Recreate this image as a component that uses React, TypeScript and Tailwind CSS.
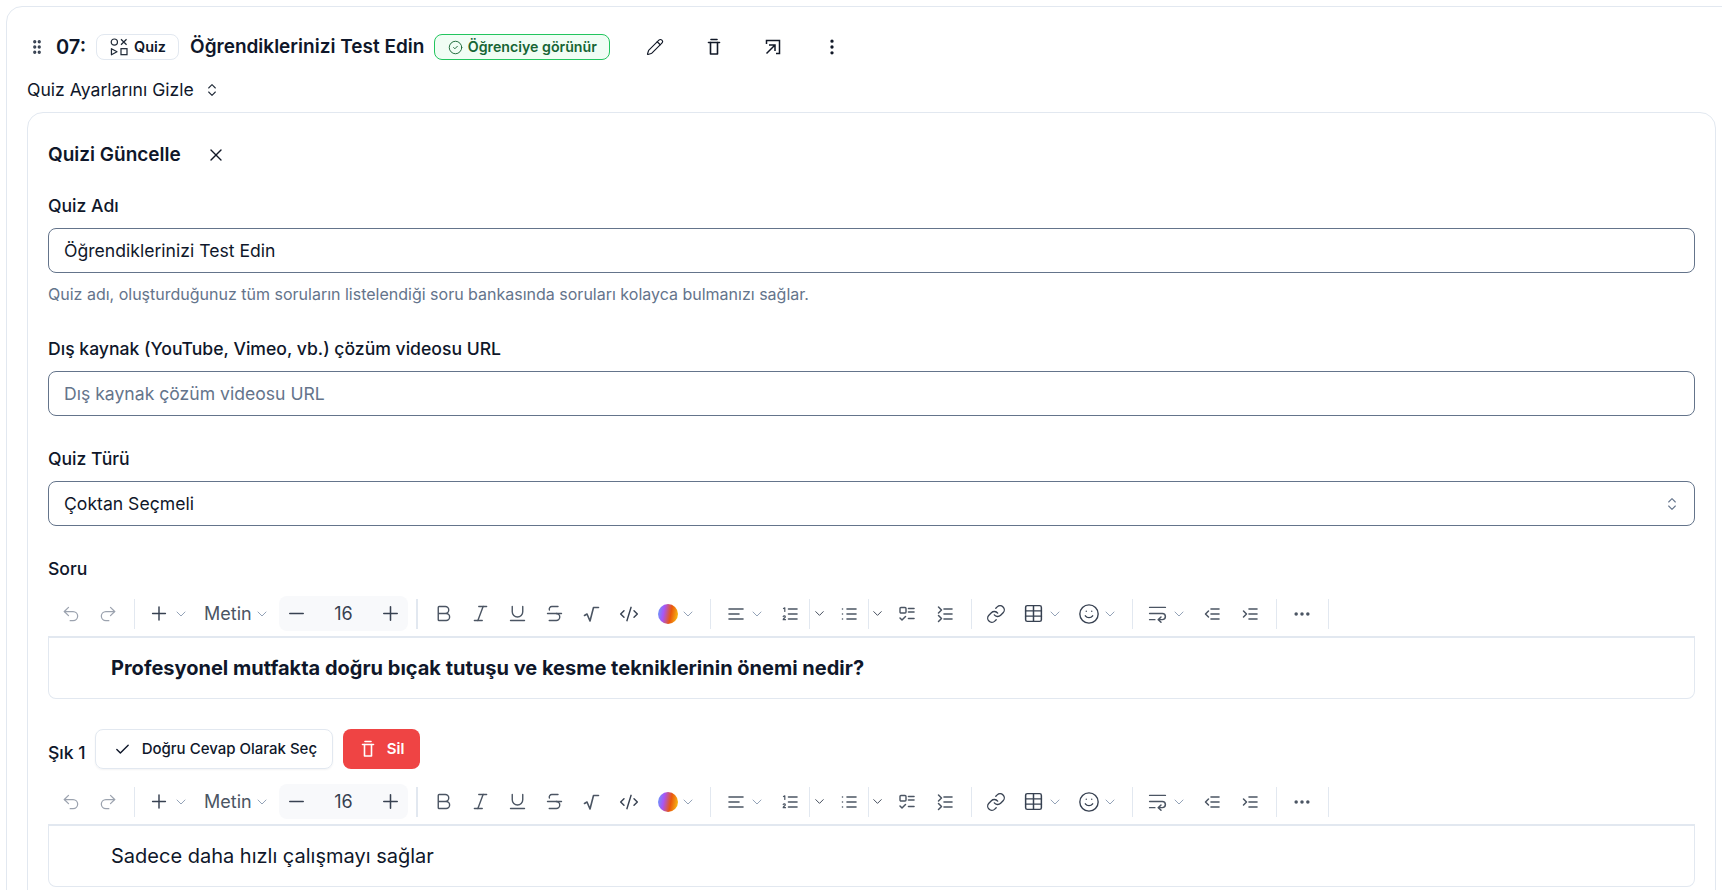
import React from 'react';
import {
  GripVertical, Pencil, X, Check, ChevronsUpDown, EllipsisVertical, Ellipsis, CircleCheck, Undo2, Redo2, Plus, Minus,
  ChevronDown, Bold, Italic, Underline, Strikethrough, CodeXml, Link, Table, Smile, WrapText,
} from 'lucide-react';

const INK = '#4b5563';

// thin trash used in the header and on the delete button
function TrashIcon({ className }: { className?: string }) {
  return (
    <svg viewBox="0 0 20 20" fill="none" stroke="currentColor" strokeWidth="1.6" strokeLinecap="round" strokeLinejoin="round" className={className}>
      <path d="M7 2.5h6" />
      <path d="M4.5 5.5h11" />
      <path d="M6.5 5.5v11.5h7V5.5" />
    </svg>
  );
}

function Lines({ children }: { children: React.ReactNode }) {
  return (
    <svg viewBox="0 0 20 20" fill="none" stroke={INK} strokeWidth="1.6" strokeLinecap="round" strokeLinejoin="round" className="w-5 h-5">
      {children}
    </svg>
  );
}

function Chev({ className, dark }: { className: string; dark?: boolean }) {
  return (
    <div className={`w-3 flex justify-center shrink-0 ${className}`}>
      <ChevronDown className={dark ? 'w-[15px] h-[15px] text-[#374151] shrink-0' : 'w-4 h-4 text-[#94a3b8] shrink-0'} strokeWidth={1.5} />
    </div>
  );
}

function Sep({ className }: { className: string }) {
  return <div className={`w-px h-[30px] bg-[#e2e8f0] shrink-0 ${className}`} />;
}

function Tool({ className, children }: { className: string; children: React.ReactNode }) {
  return <div className={`w-[22px] flex items-center justify-center shrink-0 ${className}`}>{children}</div>;
}

function Toolbar() {
  return (
    <div className="flex items-center h-[35px] text-[#374151]">
      <Tool className="ml-[12px]"><Undo2 className="w-5 h-5 text-[#9ca3af]" strokeWidth={1.5} /></Tool>
      <Tool className="ml-[15px]"><Redo2 className="w-5 h-5 text-[#9ca3af]" strokeWidth={1.5} /></Tool>
      <Sep className="ml-[15px]" />
      <Tool className="ml-[13px]"><Plus className="w-[23px] h-[23px] text-[#374151]" strokeWidth={1.6} /></Tool>
      <Chev className="ml-[5px]" />
      <span className="ml-[17px] w-[48px] text-[18px] text-[#4b5563] whitespace-nowrap">Metin</span>
      <Chev className="ml-[4px]" />
      <div className="ml-[11px] w-[129px] h-[35px] rounded-lg bg-[#f8f9fb] flex items-center justify-between px-[6px] shrink-0">
        <Minus className="w-[23px] h-[23px] text-[#374151]" strokeWidth={1.6} />
        <span className="text-[18px] text-[#374151]">16</span>
        <Plus className="w-[23px] h-[23px] text-[#374151]" strokeWidth={1.6} />
      </div>
      <div className="ml-[8px] w-[2px] h-[30px] bg-[#e2e8f0] shrink-0" />
      <Tool className="ml-[14px]"><Bold className="w-[21px] h-[21px] text-[#4b5563]" strokeWidth={1.6} /></Tool>
      <Tool className="ml-[15px]"><Italic className="w-[21px] h-[21px] text-[#4b5563]" strokeWidth={1.6} /></Tool>
      <Tool className="ml-[15px]"><Underline className="w-[21px] h-[21px] text-[#4b5563]" strokeWidth={1.6} /></Tool>
      <Tool className="ml-[15px]"><Strikethrough className="w-[21px] h-[21px] text-[#4b5563]" strokeWidth={1.6} /></Tool>
      <Tool className="ml-[16px]">
        <Lines><path d="M2.5 11.5 5 10l3 7 3.5-13.5h5" /></Lines>
      </Tool>
      <Tool className="ml-[15px]"><CodeXml className="w-5 h-5 text-[#374151]" strokeWidth={1.7} /></Tool>
      <Tool className="ml-[17px]">
        <div className="w-5 h-5 rounded-full bg-[linear-gradient(100deg,#60a5fa_0%,#a855f7_30%,#ea580c_62%,#facc15_100%)]" />
      </Tool>
      <Chev className="ml-[3px]" />
      <Sep className="ml-[16px]" />
      <Tool className="ml-[14px]">
        <Lines><path d="M3 5h14M3 10h10M3 15h14" /></Lines>
      </Tool>
      <Chev className="ml-[4px]" />
      <Tool className="ml-[16px]">
        <Lines>
          <path d="M8.5 5H17M8.5 10H17M8.5 15H17" />
          <path d="M3.5 4.5 4.8 3.8V7.5" strokeWidth="1.2" />
          <path d="M3.2 12.5c.5-.9 2.3-.7 2.1.5-.1.8-2.1 1.5-2.1 2.7h2.3" strokeWidth="1.2" />
        </Lines>
      </Tool>
      <Sep className="ml-[8px]" />
      <Chev dark className="ml-[3px]" />
      <Tool className="ml-[13px]">
        <Lines><path d="M8 5h9M8 10h9M8 15h9M3.5 5h.01M3.5 10h.01M3.5 15h.01" /></Lines>
      </Tool>
      <Sep className="ml-[8px]" />
      <Chev dark className="ml-[2px]" />
      <Tool className="ml-[13px]">
        <Lines>
          <rect x="3" y="3.5" width="6" height="5.5" rx="1" strokeWidth="1.4" />
          <path d="M11.5 4.5H17M11.5 8H17M11.5 14.5H17" />
          <path d="m3 14 2 2 3.5-3.5" strokeWidth="1.5" />
        </Lines>
      </Tool>
      <Tool className="ml-[16px]">
        <Lines>
          <path d="M9 5h8M9 10h8M9 15h8" />
          <path d="m3.5 3 3 3-3 3M3.5 11.5l3 3-3 3" strokeWidth="1.5" />
        </Lines>
      </Tool>
      <Sep className="ml-[15px]" />
      <Tool className="ml-[13px]"><Link className="w-5 h-5 text-[#374151]" strokeWidth={1.6} /></Tool>
      <Tool className="ml-[15px]"><Table className="w-[21px] h-[21px] text-[#374151]" strokeWidth={1.7} /></Tool>
      <Chev className="ml-[5px]" />
      <Tool className="ml-[17px]"><Smile className="w-[22px] h-[22px] text-[#374151]" strokeWidth={1.5} /></Tool>
      <Chev className="ml-[4px]" />
      <Sep className="ml-[16px]" />
      <Tool className="ml-[13px]"><WrapText className="w-[21px] h-[21px] text-[#4b5563]" strokeWidth={1.7} /></Tool>
      <Chev className="ml-[5px]" />
      <Tool className="ml-[16px]">
        <Lines>
          <path d="M9 5h8M9 10h8M9 15h8" />
          <path d="M6.5 7 3.5 10l3 3" strokeWidth="1.5" />
        </Lines>
      </Tool>
      <Tool className="ml-[16px]">
        <Lines>
          <path d="M9 5h8M9 10h8M9 15h8" />
          <path d="m3.5 7 3 3-3 3" strokeWidth="1.5" />
        </Lines>
      </Tool>
      <Sep className="ml-[15px]" />
      <Tool className="ml-[14px]"><Ellipsis className="w-5 h-5 text-[#4b5563]" strokeWidth={2.2} /></Tool>
      <Sep className="ml-[15px]" />
    </div>
  );
}

function Editor({ bold, children }: { bold?: boolean; children: React.ReactNode }) {
  return (
    <div className={`h-[63px] border border-t-2 border-[#e2e8f0] rounded-b-lg pl-[62px] flex items-center text-[#0f172a] text-[20px] ${bold ? 'font-bold' : ''}`}>
      {children}
    </div>
  );
}

function Label({ className, children }: { className: string; children: React.ReactNode }) {
  return <div className={`h-6 text-[17.6px] leading-6 font-medium text-[#0f172a] ${className}`}>{children}</div>;
}

function Field({ className, children }: { className: string; children: React.ReactNode }) {
  return (
    <div className={`h-[45px] border border-[#64748b] rounded-lg pl-[15px] pr-[14px] pt-px flex items-center justify-between text-[17.6px] ${className}`}>
      {children}
    </div>
  );
}

export default function App() {
  return (
    <div className="w-[1722px] h-[890px] overflow-hidden bg-white pt-[6px] pl-[6px] font-['Inter',sans-serif] text-[#0f172a]">
      <div className="w-[1780px] border border-[#e2e8f0] rounded-2xl pt-[27px] pl-[20px]">
        {/* lesson header */}
        <div className="flex items-center h-[26px]">
          <GripVertical className="ml-[1px] w-[18px] h-[18px] text-[#374151]" strokeWidth={2.4} />
          <span className="ml-[10px] text-[20px] font-semibold">07:</span>
          <div className="ml-[10px] w-[83px] h-[26px] border border-[#e2e8f0] rounded-lg flex items-center justify-center gap-[5px]">
            <svg viewBox="0 0 18 18" fill="none" stroke="#1f2937" strokeWidth="1.1" className="w-5 h-5 shrink-0">
              <circle cx="4.8" cy="4.6" r="2.8" />
              <path d="m10.8 2 5 5M15.8 2l-5 5" />
              <path d="M2.2 10.5v5.5l5-2.75z" strokeLinejoin="round" />
              <rect x="10.8" y="10.5" width="5.4" height="5.4" />
            </svg>
            <span className="text-[14.4px] font-semibold">Quiz</span>
          </div>
          <span className="ml-[11px] text-[19px] font-semibold whitespace-nowrap">Öğrendiklerinizi Test Edin</span>
          <div className="ml-[10px] w-[176px] h-[26px] border border-[#22c55e] bg-[#f0fdf4] rounded-lg flex items-center justify-center gap-[5px] text-[#166534]">
            <CircleCheck className="w-[15px] h-[15px] shrink-0" strokeWidth={1.5} />
            <span className="text-[14.2px] font-semibold whitespace-nowrap">Öğrenciye görünür</span>
          </div>
          <Pencil className="ml-[36px] w-[18px] h-[18px] text-[#111827]" strokeWidth={1.5} />
          <TrashIcon className="ml-[40px] w-[20px] h-[20px] text-[#111827]" />
          <svg viewBox="0 0 20 20" fill="none" stroke="#111827" strokeWidth="1.5" className="ml-[39px] w-[20px] h-[20px]">
            <path d="M3.5 7V3.5h13v13H13" />
            <path d="M3.5 16.5 11.5 8.5M6 8h6v6" />
          </svg>
          <EllipsisVertical className="ml-[39px] w-5 h-5 text-[#111827]" strokeWidth={2} />
        </div>

        <div className="mt-[18px] h-6 flex items-center gap-[10px] text-[17.6px]">
          <span>Quiz Ayarlarını Gizle</span>
          <ChevronsUpDown className="w-4 h-4 text-[#1f2937]" strokeWidth={1.6} />
        </div>

        {/* form card */}
        <div className="mt-[10px] w-[1689px] border border-[#e2e8f0] rounded-2xl pt-[28px] pl-[20px] pr-[20px] h-[900px]">
          <div className="flex items-center h-7">
            <span className="text-[19px] font-semibold">Quizi Güncelle</span>
            <X className="ml-[25px] w-5 h-5 text-[#111827]" strokeWidth={1.6} />
          </div>

          <Label className="mt-[25px]">Quiz Adı</Label>
          <Field className="mt-[10px]"><span>Öğrendiklerinizi Test Edin</span></Field>
          <p className="mt-[11px] h-5 text-[16px] leading-5 text-[#64748b]">
            Quiz adı, oluşturduğunuz tüm soruların listelendiği soru bankasında soruları kolayca bulmanızı sağlar.
          </p>

          <Label className="mt-[33px]">Dış kaynak (YouTube, Vimeo, vb.) çözüm videosu URL</Label>
          <Field className="mt-[10px]"><span className="text-[#64748b]">Dış kaynak çözüm videosu URL</span></Field>

          <Label className="mt-[31px]">Quiz Türü</Label>
          <Field className="mt-[10px]">
            <span>Çoktan Seçmeli</span>
            <ChevronsUpDown className="w-4 h-4 text-[#64748b]" strokeWidth={1.6} />
          </Field>

          <Label className="mt-[31px]">Soru</Label>
          <div className="mt-[15px]"><Toolbar /></div>
          <div className="mt-[5px]">
            <Editor bold>Profesyonel mutfakta doğru bıçak tutuşu ve kesme tekniklerinin önemi nedir?</Editor>
          </div>

          <div className="mt-[30px] flex items-start">
            <span className="mt-[12px] text-[17.6px] leading-6 font-medium">Şık 1</span>
            <div className="ml-[9px] w-[238px] h-10 border border-[#e2e8f0] rounded-lg flex items-center pl-[18px] gap-[11px] text-[15px] font-medium shadow-[0_1px_2px_rgba(15,23,42,0.05)]">
              <Check className="w-[17px] h-[17px] text-[#0f172a]" strokeWidth={2} />
              <span>Doğru Cevap Olarak Seç</span>
            </div>
            <div className="ml-[10px] w-[77px] h-10 rounded-lg bg-[#ef4444] flex items-center justify-center gap-[9px] text-white text-[15px] font-semibold">
              <TrashIcon className="w-5 h-5" />
              <span>Sil</span>
            </div>
          </div>
          <div className="mt-[15px]"><Toolbar /></div>
          <div className="mt-[5px]">
            <Editor>Sadece daha hızlı çalışmayı sağlar</Editor>
          </div>
        </div>
      </div>
    </div>
  );
}
